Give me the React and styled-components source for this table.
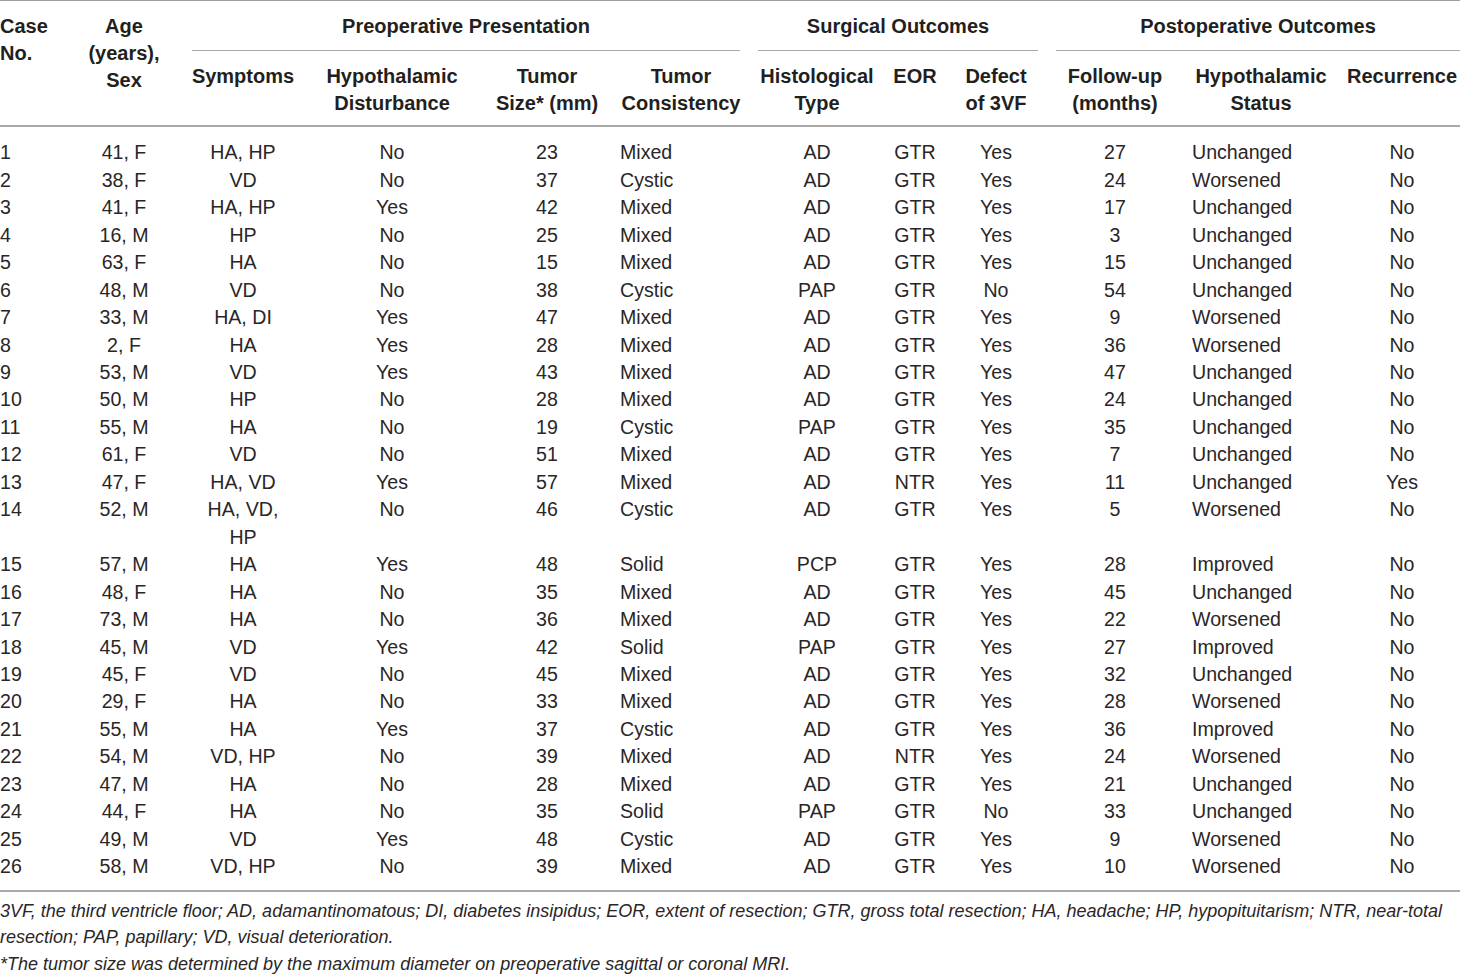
import React from "react";
import styled, { createGlobalStyle } from "styled-components";

const Global = createGlobalStyle`
  html, body { margin: 0; padding: 0; background: #ffffff; }
  body { font-family: "Liberation Sans", Arial, sans-serif; color: #231f20; }
`;

const Page = styled.div`
  width: 1460px;
  background: #fff;
`;

const Table = styled.table`
  width: 1460px;
  border-collapse: collapse;
  table-layout: fixed;
  border-top: 1.5px solid #9d9d9d;
  border-bottom: 2px solid #a9a9a9;
`;

const Head = styled.thead`
  border-bottom: 2px solid #a9a9a9;
`;

const Th = styled.th`
  font-weight: 700;
  font-size: 20px;
  line-height: 26.8px;
  text-align: ${(p) => p.$align || "center"};
  vertical-align: top;
  padding: ${(p) => (p.$row === 1 ? "12px 0 9px" : "12px 0 9px")};
  padding-left: ${(p) => p.$pl || 0}px;
  white-space: nowrap;
  color: #231f20;
`;

const SpanTh = styled.th`
  font-weight: 700;
  font-size: 20px;
  line-height: 26.8px;
  vertical-align: top;
  padding: 12px 0 0;
  color: #231f20;
`;

const Spanner = styled.div`
  margin: 0 ${(p) => p.$r}px 0 ${(p) => p.$l}px;
  padding-bottom: 10px;
  border-bottom: 1.5px solid #a9a9a9;
  text-align: center;
  white-space: nowrap;
`;

const Td = styled.td`
  font-size: 19.6px;
  line-height: 27.46px;
  text-align: ${(p) => p.$align || "center"};
  padding: 0;
  padding-left: ${(p) => p.$pl || 0}px;
  vertical-align: top;
  white-space: nowrap;
  color: #2a2627;
  tr:first-child > & { padding-top: 12px; }
  tr:last-child > & { padding-bottom: 9px; }
`;

const Notes = styled.div`
  padding-top: 6px;
  font-style: italic;
  font-size: 18px;
  line-height: 26.5px;
  color: #2a2627;
  letter-spacing: 0;
`;

const Note = styled.p`
  margin: 0;
`;

const widths = [70, 108, 130, 168, 142, 126, 146, 50, 112, 126, 166, 116];

const rows = [
  ["1", "41, F", "HA, HP", "No", "23", "Mixed", "AD", "GTR", "Yes", "27", "Unchanged", "No"],
  ["2", "38, F", "VD", "No", "37", "Cystic", "AD", "GTR", "Yes", "24", "Worsened", "No"],
  ["3", "41, F", "HA, HP", "Yes", "42", "Mixed", "AD", "GTR", "Yes", "17", "Unchanged", "No"],
  ["4", "16, M", "HP", "No", "25", "Mixed", "AD", "GTR", "Yes", "3", "Unchanged", "No"],
  ["5", "63, F", "HA", "No", "15", "Mixed", "AD", "GTR", "Yes", "15", "Unchanged", "No"],
  ["6", "48, M", "VD", "No", "38", "Cystic", "PAP", "GTR", "No", "54", "Unchanged", "No"],
  ["7", "33, M", "HA, DI", "Yes", "47", "Mixed", "AD", "GTR", "Yes", "9", "Worsened", "No"],
  ["8", "2, F", "HA", "Yes", "28", "Mixed", "AD", "GTR", "Yes", "36", "Worsened", "No"],
  ["9", "53, M", "VD", "Yes", "43", "Mixed", "AD", "GTR", "Yes", "47", "Unchanged", "No"],
  ["10", "50, M", "HP", "No", "28", "Mixed", "AD", "GTR", "Yes", "24", "Unchanged", "No"],
  ["11", "55, M", "HA", "No", "19", "Cystic", "PAP", "GTR", "Yes", "35", "Unchanged", "No"],
  ["12", "61, F", "VD", "No", "51", "Mixed", "AD", "GTR", "Yes", "7", "Unchanged", "No"],
  ["13", "47, F", "HA, VD", "Yes", "57", "Mixed", "AD", "NTR", "Yes", "11", "Unchanged", "Yes"],
  ["14", "52, M", ["HA, VD,", "HP"], "No", "46", "Cystic", "AD", "GTR", "Yes", "5", "Worsened", "No"],
  ["15", "57, M", "HA", "Yes", "48", "Solid", "PCP", "GTR", "Yes", "28", "Improved", "No"],
  ["16", "48, F", "HA", "No", "35", "Mixed", "AD", "GTR", "Yes", "45", "Unchanged", "No"],
  ["17", "73, M", "HA", "No", "36", "Mixed", "AD", "GTR", "Yes", "22", "Worsened", "No"],
  ["18", "45, M", "VD", "Yes", "42", "Solid", "PAP", "GTR", "Yes", "27", "Improved", "No"],
  ["19", "45, F", "VD", "No", "45", "Mixed", "AD", "GTR", "Yes", "32", "Unchanged", "No"],
  ["20", "29, F", "HA", "No", "33", "Mixed", "AD", "GTR", "Yes", "28", "Worsened", "No"],
  ["21", "55, M", "HA", "Yes", "37", "Cystic", "AD", "GTR", "Yes", "36", "Improved", "No"],
  ["22", "54, M", "VD, HP", "No", "39", "Mixed", "AD", "NTR", "Yes", "24", "Worsened", "No"],
  ["23", "47, M", "HA", "No", "28", "Mixed", "AD", "GTR", "Yes", "21", "Unchanged", "No"],
  ["24", "44, F", "HA", "No", "35", "Solid", "PAP", "GTR", "No", "33", "Unchanged", "No"],
  ["25", "49, M", "VD", "Yes", "48", "Cystic", "AD", "GTR", "Yes", "9", "Worsened", "No"],
  ["26", "58, M", "VD, HP", "No", "39", "Mixed", "AD", "GTR", "Yes", "10", "Worsened", "No"],
];

const cellProps = (i) => {
  if (i === 0) return { $align: "left" };
  if (i === 5) return { $align: "left", $pl: 2 };
  if (i === 10) return { $align: "left", $pl: 14 };
  return {};
};

const renderCell = (v) =>
  Array.isArray(v) ? v.map((s, k) => (
    <React.Fragment key={k}>
      {k > 0 && <br />}
      {s}
    </React.Fragment>
  )) : v;

export default function App() {
  return (
    <Page>
      <Global />
      <Table>
        <colgroup>
          {widths.map((w, i) => (
            <col key={i} style={{ width: w }} />
          ))}
        </colgroup>
        <Head>
          <tr>
            <Th $row={1} rowSpan={2} $align="left">
              Case
              <br />
              No.
            </Th>
            <Th $row={1} rowSpan={2}>
              Age
              <br />
              (years),
              <br />
              Sex
            </Th>
            <SpanTh colSpan={4}>
              <Spanner $l={14} $r={4}>Preoperative Presentation</Spanner>
            </SpanTh>
            <SpanTh colSpan={3}>
              <Spanner $l={14} $r={14}>Surgical Outcomes</Spanner>
            </SpanTh>
            <SpanTh colSpan={3}>
              <Spanner $l={4} $r={0}>Postoperative Outcomes</Spanner>
            </SpanTh>
          </tr>
          <tr>
            <Th>Symptoms</Th>
            <Th>
              Hypothalamic
              <br />
              Disturbance
            </Th>
            <Th>
              Tumor
              <br />
              Size* (mm)
            </Th>
            <Th>
              Tumor
              <br />
              Consistency
            </Th>
            <Th>
              Histological
              <br />
              Type
            </Th>
            <Th>EOR</Th>
            <Th>
              Defect
              <br />
              of 3VF
            </Th>
            <Th>
              Follow-up
              <br />
              (months)
            </Th>
            <Th>
              Hypothalamic
              <br />
              Status
            </Th>
            <Th>Recurrence</Th>
          </tr>
        </Head>
        <tbody>
          {rows.map((r, ri) => (
            <tr key={ri}>
              {r.map((v, i) => (
                <Td key={i} {...cellProps(i)}>
                  {renderCell(v)}
                </Td>
              ))}
            </tr>
          ))}
        </tbody>
      </Table>
      <Notes>
        <Note>
          3VF, the third ventricle floor; AD, adamantinomatous; DI, diabetes insipidus; EOR, extent of resection; GTR, gross total resection; HA, headache; HP, hypopituitarism; NTR, near-total resection; PAP, papillary; VD, visual deterioration.
        </Note>
        <Note>*The tumor size was determined by the maximum diameter on preoperative sagittal or coronal MRI.</Note>
      </Notes>
    </Page>
  );
}
